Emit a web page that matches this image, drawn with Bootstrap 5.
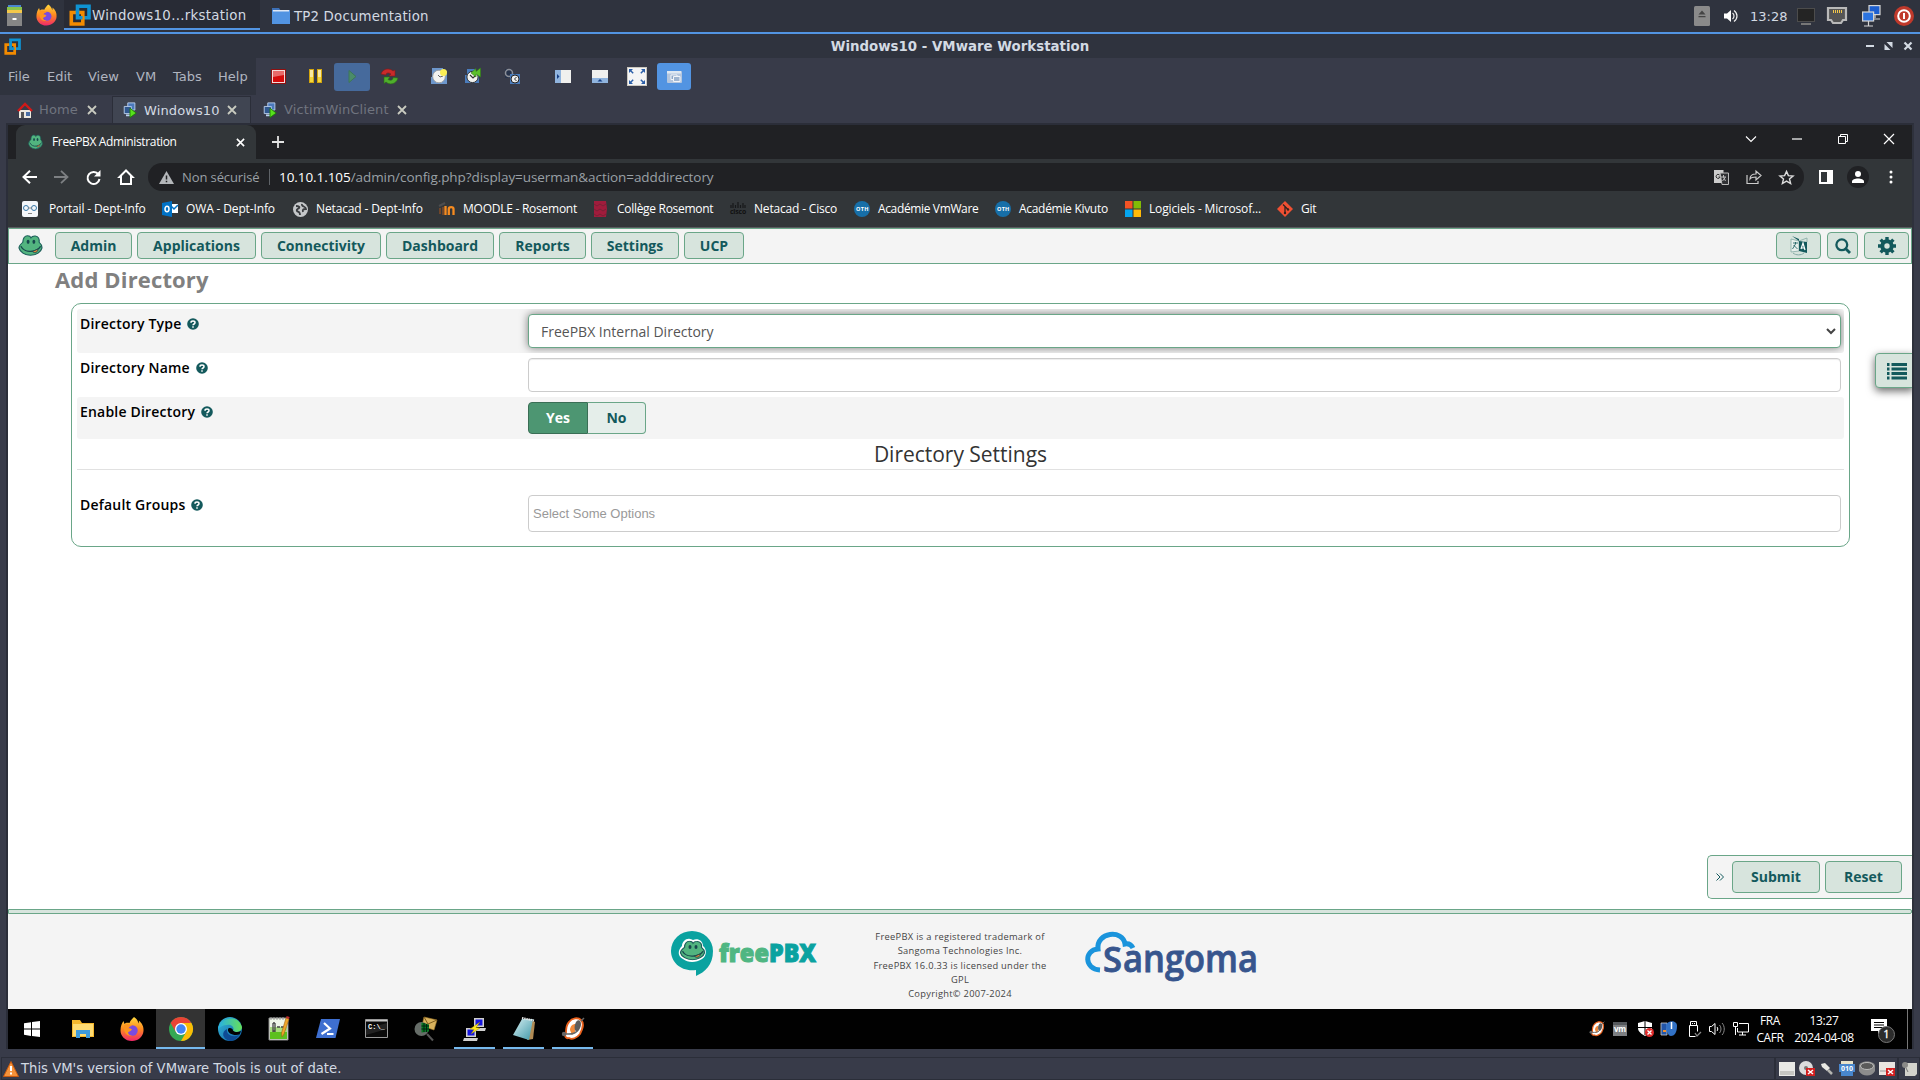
<!DOCTYPE html>
<html lang="fr">
<head>
<meta charset="utf-8">
<title>Windows10 - VMware Workstation</title>
<link href="https://cdn.jsdelivr.net/npm/bootstrap@5.3.0/dist/css/bootstrap.min.css" rel="stylesheet">
<style>
html,body{width:1920px;height:1080px;overflow:hidden}
body{background:#383b49;font-family:"DejaVu Sans",sans-serif;font-size:13px;line-height:1;color:#d3dae3}
svg{display:block;flex:none;overflow:visible}
.seg{font-family:"Open Sans","Noto Sans",sans-serif}
.cellx{display:flex;align-items:center;justify-content:center;flex:none}
/* host panel */
.panel-top{height:34px;background:#2f333e;border-bottom:2px solid #5294e2;padding-left:7px}
.panel-top .ffx{margin-left:14px}
.task-on{width:196px;height:30px;background:#282b35;border-bottom:2px solid #5294e2;padding:4px 0 0 5px;margin-left:7px}
.task-on svg{margin-top:-2px}
.task-on span{margin-left:1px;font-size:13.33px;letter-spacing:.3px;white-space:nowrap}
.task-off{height:32px;margin-left:12px;gap:4px;font-size:13.33px;letter-spacing:.18px}
.task-off span{padding-top:2px}
.hosttray{height:32px;padding-right:6px}.clk{width:47px;padding-left:12px;margin-right:12px}.i1{margin-left:14px}.i2{margin-left:12px}.i3{margin-left:15px}.i4{margin-left:13px}
.titlebar{height:24px;background:#2f333e;font-weight:700;font-size:13.33px;letter-spacing:.02px}
.titlebar .mid{padding-top:1px}
.titlebar .side{width:110px}
.menus{height:37px;width:256px;background:#2f333e;color:#b0b5c0;padding:0 0 1px 8px;font-size:13px}
.menus span{flex:none}
.menus span:nth-child(1){width:39px}.menus span:nth-child(2){width:41px}.menus span:nth-child(3){width:48px}.menus span:nth-child(4){width:37px}.menus span:nth-child(5){width:45px}
.tools .cellx{height:28px}
.tools .cellx:not(.playb):not(.unity){margin-top:-1px}
.t44{width:44px}.t34{width:30px;margin-right:4px}.playb{width:36px;background:#466a9c;border-radius:3px}.t40{width:38px}.t60{width:32px;margin-left:15px}.t36{width:37px}.t39{width:39px;margin-right:12px}.t61{width:39px}.t14{width:36px}
.unity{width:34px;height:27px!important;background:#5294e2;border-radius:3px;margin-left:2px}
.vmtabs{height:28px;padding-left:6px}
.vmtab{height:27px;margin-top:1px;padding:0 10px;color:#70747f;letter-spacing:.12px}
.vmtab.on{background:#404552;border:1px solid #2b2e39;border-bottom:0;color:#d3dae3}
.vmtab svg.cl{color:#c9cbc0}
.tabA{width:106px;padding-left:11px}.tabA .nm{width:48px;margin-left:6px}.tabB{width:139px}.tabB .nm{width:83px;margin-left:7px}.tabC .nm{width:113px;margin-left:7px}.vmtab.tabC{padding-left:12px}
.vm-frame{margin-left:6px;width:1908px;border:2px solid #2b2e39;border-bottom:0;border-right:2px solid #2e313c}
.guest{width:1904px;height:924px;background:#fff}
/* browser */
.strip{height:34px;background:#202124}
.btab{width:240px;height:34px;margin-left:8px;background:#323639;border-radius:9px 9px 0 0;color:#fff;font-size:12px;padding:0 11px 0 12px}
.btt{margin-left:9px;letter-spacing:-.36px}.plus{margin-left:16px}.winb{gap:36px;padding-right:18px;margin-top:-6px}
.toolbar{height:36px;background:#323639}
.omni{width:1656px;height:28px;background:#202124;border-radius:14px;color:#9aa0a6;font-size:14px}
.omni .sep{width:1px;height:16px;background:#5f6368;margin:0 9px 0 8px}
.navi{padding-left:14px;width:140px;gap:17px}.warn{margin:0 8px 0 11px}.ns{width:79px;letter-spacing:-.1px;font-size:13px}.url{font-size:13.5px;letter-spacing:-.07px;padding-top:1px}
.omr{gap:17px;padding-right:10px}.sp{margin-left:15px}.av{margin-left:14px}.dots{margin-left:20px}
.marks{height:33px;background:#323639;color:#fff;font-size:12px;padding:0 0 4px 14px;border-bottom:1px solid #5a5c60}
.bm{flex:none;display:flex;align-items:center;gap:8px;white-space:nowrap;letter-spacing:-.3px}
.bm:nth-child(-n+3){letter-spacing:-.14px}
.bm:nth-child(1){width:140px;gap:11px}.bm:nth-child(2){width:131px}.bm:nth-child(3){width:146px}.bm:nth-child(4){width:154px;letter-spacing:-.25px}.bm:nth-child(5){width:137px}.bm:nth-child(6){width:124px;letter-spacing:-.18px}.bm:nth-child(7){width:141px;letter-spacing:-.36px}.bm:nth-child(8){width:130px}.bm:nth-child(9){width:152px;letter-spacing:-.15px}
/* FreePBX page */
.site{height:781px;font-family:"Open Sans",sans-serif;position:relative;overflow:hidden}
.fnav{height:36px;background:#f4f4f4;border:1px solid #6aa688;padding:0 2px 1px 9px}
.fbtn,.fbtn:hover{height:27px;background:#d7e4dd;border:1px solid #6aa688;border-radius:4px;color:#13595c;font-weight:700;font-size:14px;padding:0;display:flex;align-items:center;justify-content:center;line-height:1;text-decoration:none}
.fmenu{gap:5px;margin-left:11px}.fright{gap:6px}
.fmenu .fbtn:nth-child(1){width:77px}.fmenu .fbtn:nth-child(2){width:119px}.fmenu .fbtn:nth-child(3){width:120px}.fmenu .fbtn:nth-child(4){width:108px}.fmenu .fbtn:nth-child(5){width:87px}.fmenu .fbtn:nth-child(6){width:88px}.fmenu .fbtn:nth-child(7){width:60px}
.w45{width:45px}.w31{width:31px}
.ttl{font-size:22px;letter-spacing:.15px;font-weight:700;color:#808080;margin:0;padding:3px 0 0 47px;height:39px;line-height:24px}
.pane{margin-left:63px;width:1779px;height:244px;border:1px solid #6aa688;border-radius:10px;padding:5px}
.frow{height:44px;padding:5px 3px 0;display:flex;border-radius:3px}
.frow.alt{background:#f4f4f4}
.frow .lb{width:448px;flex:none;color:#000;font-weight:600;font-size:14px;letter-spacing:.2px;line-height:20px;display:flex;gap:6px;align-items:center;height:20px}
.frow .form-control{width:1313px;height:34px;border:1px solid #ccc;border-radius:4px;font-size:14px;color:#555;padding:0 7px 0 12px;display:flex;align-items:center;justify-content:space-between;box-shadow:inset 0 1px 1px rgba(0,0,0,.075);background:#fff}
.frow .form-control.foc{border-color:#6aa688;box-shadow:0 0 8px rgba(0,0,0,.5)}
.clip{overflow:hidden}.r3{height:42px}
.frow.r4{padding-top:25px;height:62px}.r4 .form-control.chz{height:37px;font-family:"Liberation Sans",sans-serif;font-size:13px;color:#999;padding-left:4px;box-shadow:none}
.car{margin-right:-3px}
.yn{width:60px;height:32px;font-weight:700;font-size:14px;display:flex;align-items:center;justify-content:center;border:1px solid #6aa688}
.yn.y{background:#4d9672;color:#fff;border-color:#3a6e55;border-radius:4px 0 0 4px}
.yn.n{width:58px;background:#e5eeea;color:#13595c;border-left:0;border-radius:0 4px 4px 0}
.sect{height:31px;border-bottom:1px solid #e1e1e1;text-align:center;font-size:21px;letter-spacing:-.02px;color:#333;line-height:30px}
.foot{height:100px;margin-top:362px}
.bar5{height:5px;border:1px solid #6aa688;background:#d7e4dd;border-radius:0 2px 2px 0}
.fbody{background:#f4f4f4;height:95px;display:flex}
.ftxt{font-size:9.3px;line-height:14.3px;color:#444;text-align:center;letter-spacing:.3px;width:200px;padding-top:16px;margin-left:43px}
.lg1{margin:17px 0 0 663px}.lg2{margin:18px 0 0 25px}
.sidebtn{position:absolute;right:-2px;top:125px;width:39px;height:35px;background:#d7e4dd;border:1px solid #6aa688;border-radius:4px 0 0 4px;box-shadow:0 3px 9px rgba(0,0,0,.6);padding:0 0 0 11px;line-height:1}
.actions{position:absolute;right:-1px;top:627px;width:206px;height:44px;background:#f4f4f4;border:1px solid #6aa688;border-right:0;border-radius:5px 0 0 5px;color:#13595c}
.actions .fbtn{height:32px}
.chev{width:24px;display:flex;justify-content:center}.sb{width:88px;margin-right:5px}.rs{width:77px}
/* guest taskbar */
.wbar{height:40px;background:#010101}
.tb{width:49px;height:40px;border-bottom:2px solid transparent;padding-top:1px;flex:none;display:flex;align-items:center;justify-content:center}
.tb.act{background:#333;border-color:#76b9ed}
.tb.run{width:41px;margin:0 4px;border-color:#76b9ed}
.wbar>.tb:first-child{width:50px;padding-right:2px}
.tray{color:#fff;font-size:12px;text-align:center;line-height:17px}
.tray .a{margin-left:8px}.tray .b{margin-left:11px}.tray .c{margin-left:7px}.tray .d{margin-left:11px}.tray .e{margin-left:7px}.tray .f{margin-left:8px}
.tray .g{width:30px;margin-left:6px;letter-spacing:-.4px}.tray .h{width:60px;margin-left:9px;letter-spacing:-.3px}.tray .n{margin:3px 12px 0 17px}.pk{width:1px;height:40px;background:#777;margin-right:4px}
/* host status bar */
.stat{height:23px;border:1px solid #2b2e39;margin:8px 0 0 1px;padding-left:1px;font-size:13.2px}
.stat .dev{border-left:2px solid #2b2e39;height:21px;padding:0 1px 0 3px;gap:4px}
.stt{margin-left:2px}.stat .dev svg:nth-child(3){margin:0 1px}.stat .last{width:22px;padding:0 0 0 3px;margin-left:1px}
</style>
<script src="https://cdn.jsdelivr.net/npm/bootstrap@5.3.0/dist/js/bootstrap.bundle.min.js"></script>
</head>
<body>
<svg width="0" height="0" class="position-absolute">
<defs>
<linearGradient id="ffo" x1="0" y1="0" x2="0" y2="1"><stop offset="0" stop-color="#ffd83d"/><stop offset=".5" stop-color="#ff8a1f"/><stop offset="1" stop-color="#f0286a"/></linearGradient>
<linearGradient id="edg" x1="0" y1="0" x2="1" y2="1"><stop offset="0" stop-color="#37bdd8"/><stop offset="1" stop-color="#0c59a4"/></linearGradient>
<linearGradient id="edg2" x1="0" y1="0" x2="1" y2="0"><stop offset="0" stop-color="#27b0e6"/><stop offset="1" stop-color="#66e05a"/></linearGradient>
<linearGradient id="npg" x1="0" y1="0" x2="1" y2="1"><stop offset="0" stop-color="#d5eef1"/><stop offset="1" stop-color="#3f98a8"/></linearGradient>
</defs>
<symbol id="ff" viewBox="0 0 24 24"><path d="M14 0c3 2 4 4 4.500 6.500.5-1 .5-2 .3-3C22 6 24 10 23.500 14 23 20 18 24 12 24 5 24 .3 19 .5 13 .6 9 2 6 3.500 4l1 3C5.500 5.500 7.500 5.500 9.500 6 10 4 12 2 14 0z" fill="url(#ffo)"/><circle cx="12.500" cy="13.500" r="5.200" fill="#7a4be0"/><path d="M4 8c3-2 6-1 8 1-2 0-3 1-3.500 2.500 1.500-.5 2.500.5 3.500 1-1 2-3 1.500-4 3 0 1 1 3 4 3-5 1.500-9-3-8-10.500z" fill="#ff9520"/></symbol>
<symbol id="vmw" viewBox="0 0 22 22"><g fill="none" stroke-width="3.600"><path d="M8.500 8.500V2.300h11.500v11.500H14" stroke="#0f93d3"/><path d="M8.500 8.500H2.300V20h11.500V8.500z" stroke="#f38b00"/><path d="M8.500 6v7.800h5" stroke="#0f93d3"/></g></symbol>
<symbol id="frog" viewBox="0 0 26 26"><path d="M5 9C5 4 7 1 10 1c2 0 3 1 3.500 2.500C14.500 1.500 16 1 18 1.200c3 .3 4.500 3.500 4 7.800 2 2 3 4.500 3 7C24 21 19 25 13 25S2 21 1 16c0-3 2-5 4-7z" fill="#52b47f" stroke="#1c5e5a" stroke-width="1.200"/><path d="M3 14c2 5 7 7 12 6 4-.5 7-3 8.500-6" fill="none" stroke="#17474d" stroke-width="1.500"/><ellipse cx="10.500" cy="8.500" rx="1.500" ry="2.600" fill="#17474d"/><ellipse cx="16.500" cy="8.500" rx="1.500" ry="2.600" fill="#17474d"/><path d="M15 20.500l5.500-3c1 3-3 6-5.500 3z" fill="#e88a3a" stroke="#17474d"/></symbol>
<symbol id="frogw" viewBox="0 0 26 26" preserveAspectRatio="none"><use href="#frog" width="26" height="26"/></symbol>
<symbol id="x" viewBox="0 0 10 10"><path d="M1 1l8 8M9 1L1 9" stroke="currentColor" stroke-width="1.800"/></symbol>
<symbol id="run" viewBox="0 0 15 18"><path d="M5 1h8v8H5z" fill="#4a78bb" stroke="#bcd2ef"/><path d="M1 5h8v8H1z" fill="#31588f" stroke="#bcd2ef"/><path d="M3 15h5" stroke="#bcd2ef" stroke-width="2"/><path d="M7.500 7l7 5.500-7 5z" fill="#57e01c" stroke="#1d7a08"/></symbol>
<symbol id="help" viewBox="0 0 12 12"><circle cx="6" cy="6" r="5.800" fill="#13595c"/><path d="M4 4.700C4 2.500 8 2.500 8 4.700 8 6 6 6 6 7.300M6 8.200v1.500" fill="none" stroke="#fff" stroke-width="1.500"/></symbol>
<symbol id="oth" viewBox="0 0 16 16"><circle cx="8" cy="8" r="8" fill="#176fa8"/><text x="8" y="10.300" text-anchor="middle" font-family="Open Sans" font-size="5.500" font-weight="700" fill="#fff" textLength="12">OTH</text></symbol>
<symbol id="head" viewBox="0 0 24 24"><path d="M8 5c3-4 9-5 12-2 4 4 1 10-1 14-3 4-8 6-11 4-3 1-5-2-3-5 0-4 0-8 3-11z" fill="#fff" stroke="#e8601c" stroke-width="1.800"/><path d="M9 13c0-4 3-6 5-6v8l-3 3z" fill="#f08a3c"/><path d="M15 5c2-3 5-2 5 2 0 3-2 7-4 8-3-1-3-6-1-10z" fill="#5c5c5c"/><path d="M20 4l3-3M16 14c-3 4-7 3-11 3" stroke="#666" stroke-width="1.500" fill="none"/><circle cx="3" cy="17" r="2.200" fill="#666"/></symbol>
</svg>

<!-- host panel -->
<header class="panel-top d-flex align-items-start">
  <div class="cellx"><svg class="mt-1" width="15" height="22" viewBox="0 0 15 22"><path d="M1 1h13v3H1z" fill="#4a86cf"/><path d="M0 3h15v3H0z" fill="#8bc34a"/><path d="M0 6h15v3H0z" fill="#f4c84a"/><path d="M0 9h15v13H0z" fill="#868686"/><path d="M5.500 14h4v2h-4z" fill="#fff"/></svg></div>
  <div class="cellx ffx mt-1"><svg width="21" height="22"><use href="#ff" width="21" height="22"/></svg></div>
  <div class="task-on d-flex align-items-center"><svg width="22" height="22"><use href="#vmw" width="22" height="22"/></svg><span>Windows10...rkstation</span></div>
  <div class="task-off d-flex align-items-center"><svg width="18" height="16" viewBox="0 0 18 16"><path d="M0 0h7l2 3H0z" fill="#3c6fb5"/><path d="M0 2h18v14H0z" fill="#5294e2"/><path d="M1 2h16v1.500H1z" fill="#dfe8f5"/></svg><span>TP2 Documentation</span></div>
  <div class="ms-auto d-flex align-items-center hosttray">
    <svg width="16" height="20" viewBox="0 0 16 20"><rect width="16" height="20" rx="1.500" fill="#8a8a8a"/><path d="M4.500 8.500L8 4.500l3.500 4zM4.500 10h7v1.300h-7z" fill="#444"/></svg>
    <svg class="i1" width="14" height="14" viewBox="0 0 14 14"><path d="M0 4.500h3L7 1v12L3 9.500H0z" fill="#fff"/><path d="M8.500 4c2 1.500 2 4.500 0 6M10 1.500c4 3 4 8 0 11" fill="none" stroke="#eee" stroke-width="1.200"/></svg>
    <span class="clk">13:28</span>
    <svg width="18" height="17" viewBox="0 0 18 17"><rect x=".5" y=".5" width="17" height="13" fill="#242424" stroke="#4c4c4c"/><path d="M4 15h10v2H4z" fill="#777"/></svg>
    <svg class="i2" width="20" height="18" viewBox="0 0 20 18"><path d="M1 1h18v12h-3l-2 3H6l-2-3H1z" fill="#555" stroke="#b9b9b9" stroke-width="2.200"/><path d="M6.500 3v3m2-3v3m2-3v3m2-3v3m2-3v3" stroke="#f4c84a"/></svg>
    <svg class="i3" width="19" height="22" viewBox="0 0 19 22"><g stroke="#d5d5d5" stroke-width="1.200"><rect x="7" y=".6" width="11" height="9" fill="#1d5fd0"/><path d="M10 14h8M13 10v3"/><rect x=".6" y="7" width="11" height="9" fill="#2c74e0"/><path d="M2 21h9M6.500 16v5"/></g></svg>
    <svg class="i4" width="20" height="20" viewBox="0 0 20 20"><circle cx="10" cy="10" r="10" fill="#c0392b"/><circle cx="10" cy="10" r="5.800" fill="none" stroke="#fff" stroke-width="2"/><path d="M10 7v6" stroke="#fff" stroke-width="2"/></svg>
  </div>
</header>

<div class="titlebar d-flex align-items-center justify-content-between">
  <div class="side ps-1"><svg width="17" height="17"><use href="#vmw" width="17" height="17"/></svg></div>
  <div class="mid">Windows10 - VMware Workstation</div>
  <div class="side d-flex align-items-center justify-content-end pe-2"><svg class="me-2" width="29" height="10" viewBox="0 0 29 10"><path d="M3 5h8" stroke="#d3dae3" stroke-width="2"/><path d="M23.500 1h6v6zM21.500 3v6h6z" fill="#d3dae3"/></svg><svg class="ms-1" width="8" height="8" viewBox="0 0 8 8"><path d="M.5.500l7 7m0-7l-7 7" stroke="#d3dae3" stroke-width="2.200"/></svg></div>
</div>

<div class="d-flex align-items-center">
  <nav class="menus d-flex align-items-center"><span>File</span><span>Edit</span><span>View</span><span>VM</span><span>Tabs</span><span>Help</span></nav>
  <div class="tools d-flex align-items-center">
    <div class="cellx t44"><svg width="15" height="15" viewBox="0 0 15 15"><rect width="15" height="15" fill="#8e1010"/><rect x="1" y="1" width="13" height="13" fill="#f3dada"/><rect x="2" y="2" width="11" height="11" fill="#d40b0b"/><path d="M2 2h11v4L2 8z" fill="#e86a6a"/></svg></div>
    <div class="cellx t34"><svg width="13" height="14" viewBox="0 0 13 14"><path d="M0 0h5v14H0zM8 0h5v14H8z" fill="#d3a50e"/><path d="M1 1h3v7H1zM9 1h3v7H9z" fill="#faeaa0"/><path d="M1 8h3v5H1zM9 8h3v5H9z" fill="#f4d63c"/></svg></div>
    <div class="cellx playb"><svg width="9" height="13" viewBox="0 0 9 13"><path d="M1 .5l7 6-7 6z" fill="#4b8c69" stroke="#3c7659"/></svg></div>
    <div class="cellx t40"><svg width="17" height="15" viewBox="0 0 17 15"><path d="M0 5C2-1 9-1 12 2l2-1v6H8l2-2C7 3 5 4 5 6z" fill="#c92a2a" stroke="#8c1717" stroke-width=".6"/><path d="M17 9c-2 7-9 7-12 4l-2 1.500V8h6l-2 2.500c3 1.500 5 .5 5-2z" fill="#4fae2c" stroke="#2a6c15" stroke-width=".6"/></svg></div>
    <div class="cellx t60"><svg width="16" height="16" viewBox="0 0 16 16"><path d="M1 0h11v3h4v13H0V9h1z" fill="#6d97cc"/><circle cx="8" cy="8.500" r="6.300" fill="#f3f3f0" stroke="#999" stroke-width=".8"/><path d="M7 7l2 2 3-1" fill="none" stroke="#666"/><circle cx="12.500" cy="4.500" r="3.500" fill="#fbee55"/></svg></div>
    <div class="cellx t36"><svg width="17" height="16" viewBox="0 0 17 16"><path d="M2 1h8v2h4v12H0V7h2z" fill="#4a7cbd"/><circle cx="7.500" cy="9" r="5.600" fill="#f3f3f0" stroke="#333"/><path d="M5 7l3 3 3-3" fill="none" stroke="#333" stroke-width="1.200"/><path d="M6 5l5-4.500v3l4.500-3.500v9L11 6v3z" fill="#5cbf2c" stroke="#2f7d14" stroke-width=".6"/></svg></div>
    <div class="cellx t39"><svg width="16" height="16" viewBox="0 0 16 16"><path d="M1 1h7v9H1z" fill="#26324a"/><circle cx="5" cy="5" r="3.500" fill="none" stroke="#8c8f98" stroke-width="1.500"/><path d="M6 6h10v10H6z" fill="#4a7cbd"/><circle cx="11" cy="11" r="4" fill="#eee" stroke="#222"/><path d="M12.500 9l-2 2 2 2" stroke="#333" fill="none"/></svg></div>
    <div class="cellx t61"><svg width="16" height="13" viewBox="0 0 16 13"><rect width="16" height="13" fill="#f0f0ee"/><path d="M0 0h6v13H0z" fill="#90b4de"/><path d="M2 4v5l2.500-2.500z" fill="#153d83"/></svg></div>
    <div class="cellx t14"><svg width="16" height="13" viewBox="0 0 16 13"><rect width="16" height="13" fill="#f0f0ee"/><path d="M0 8h16v5H0z" fill="#90b4de"/><path d="M5.500 11.500h5L8 9z" fill="#153d83"/></svg></div>
    <div class="cellx t36"><svg width="20" height="19" viewBox="0 0 20 19"><rect x=".5" y=".5" width="19" height="18" fill="#f5f5f5" stroke="#ccc8c0"/><g fill="#2c5fa8"><path d="M2 2h4L2 6zM18 2h-4l4 4zM2 17h4l-4-4zM18 17h-4l4-4z"/></g><path d="M3 3l4 4m10-4l-4 4M3 16l4-4m10 4l-4-4" stroke="#2c5fa8" stroke-width="1.500" stroke-dasharray="4.500 2"/></svg></div>
    <div class="cellx unity"><svg width="15" height="12" viewBox="0 0 15 12"><rect width="15" height="12" rx="1" fill="#b4c6de"/><path d="M0 0h14v2.500H0z" fill="#dfe8f2"/><path d="M4 4h6v4.500H4z" fill="#8da7c8" stroke="#f2f5f9"/><path d="M6.500 5.500h6.500v5H6.500z" fill="#9fb5d1" stroke="#f2f5f9"/></svg></div>
  </div>
</div>

<div class="vmtabs d-flex">
  <div class="vmtab d-flex align-items-center tabA"><svg width="16" height="16" viewBox="0 0 16 16"><path d="M2 8h12v8H2z" fill="#ece9df"/><path d="M1 9l7-7 7 7" fill="none" stroke="#d01818" stroke-width="2.400"/><path d="M4 10h3v6H4z" fill="#555"/><path d="M9 10h4v4H9z" fill="#4a6fa5"/></svg><span class="nm">Home</span><svg class="cl" width="10" height="10"><use href="#x" width="10" height="10"/></svg></div>
  <div class="vmtab on d-flex align-items-center tabB"><svg width="14" height="16"><use href="#run" width="14" height="16"/></svg><span class="nm">Windows10</span><svg class="cl" width="10" height="10"><use href="#x" width="10" height="10"/></svg></div>
  <div class="vmtab d-flex align-items-center tabC"><svg width="14" height="16"><use href="#run" width="14" height="16"/></svg><span class="nm">VictimWinClient</span><svg class="cl" width="10" height="10"><use href="#x" width="10" height="10"/></svg></div>
</div>

<div class="vm-frame"><main class="guest">
  <div class="strip d-flex align-items-center seg">
    <div class="btab d-flex align-items-center"><svg width="15" height="16"><use href="#frog" width="15" height="16"/></svg><span class="btt">FreePBX Administration</span><svg class="ms-auto" width="9" height="9" color="#fff"><use href="#x" width="9" height="9"/></svg></div>
    <svg class="plus" width="12" height="12" viewBox="0 0 12 12"><path d="M6 0v12M0 6h12" stroke="#e3e3e3" stroke-width="1.800"/></svg>
    <div class="ms-auto d-flex align-items-center winb">
      <svg width="10" height="6" viewBox="0 0 10 6"><path d="M0 .5l5 5 5-5" fill="none" stroke="#fff" stroke-width="1.100"/></svg>
      <svg width="10" height="2" viewBox="0 0 10 2"><path d="M0 1h10" stroke="#fff" stroke-width="1.200"/></svg>
      <svg width="10" height="10" viewBox="0 0 10 10"><path d="M.5 2.500h7v7h-7zM2.500 2V.5h7v7H8" fill="none" stroke="#fff"/></svg>
      <svg width="10" height="10" viewBox="0 0 10 10"><path d="M0 0l10 10M10 0L0 10" stroke="#fff" stroke-width="1.200"/></svg>
    </div>
  </div>
  <div class="toolbar d-flex align-items-center seg">
    <div class="d-flex align-items-center navi">
      <svg width="15" height="14" viewBox="0 0 15 14"><path d="M15 7H1.500M8 .8L1.500 7 8 13.200" fill="none" stroke="#fff" stroke-width="2"/></svg>
      <svg width="15" height="14" viewBox="0 0 15 14"><path d="M0 7h13.500M7 .8L13.500 7 7 13.200" fill="none" stroke="#7d8083" stroke-width="1.800"/></svg>
      <svg width="15" height="15" viewBox="0 0 15 15"><path d="M12.500 4.500A6 6 0 1 0 13.500 9" fill="none" stroke="#fff" stroke-width="2"/><path d="M14.500 0v6.500H8z" fill="#fff"/></svg>
      <svg width="16" height="16" viewBox="0 0 16 16"><path d="M8 1.500L1.500 8H3v7h10V8h1.500z" fill="none" stroke="#fff" stroke-width="2"/></svg>
    </div>
    <div class="omni d-flex align-items-center">
      <svg class="warn" width="15" height="13" viewBox="0 0 15 13"><path d="M7.500 0L15 13H0z" fill="#b4b7ba"/><path d="M7.500 4.500v4M7.500 9.700v1.600" stroke="#202124" stroke-width="1.500"/></svg>
      <span class="ns">Non sécurisé</span><span class="sep"></span><span class="url"><span class="text-white">10.10.1.105</span>/admin/config.php?display=userman&amp;action=adddirectory</span>
      <div class="ms-auto d-flex align-items-center omr">
        <svg width="15" height="15" viewBox="0 0 15 15"><rect x=".5" y=".5" width="8.500" height="12" fill="#ccc" stroke="#ccc"/><path d="M6 3h8.500v11.500H8z" fill="#303134" stroke="#bbb"/><path d="M7 7h5m-2.500-2v2l2 4m0-4l-3 4" stroke="#bbb" fill="none"/><path d="M5.500 5a2 2 0 1 0 .5 2H4.500" stroke="#333" fill="none"/></svg>
        <svg width="16" height="14" viewBox="0 0 16 14"><path d="M1 5v8.500h11V11M4 9c0-4 3-5 6-5V1l5 4.500L10 10V7C7 7 5 7.500 4 9z" fill="none" stroke="#ccc" stroke-width="1.200"/></svg>
        <svg width="15" height="15" viewBox="0 0 16 16"><path d="M8 1.500l2 4.500 5 .4-3.800 3.200L12.400 14.500 8 11.800l-4.400 2.700 1.200-4.900L1 6.400 6 6z" fill="none" stroke="#ddd" stroke-width="1.500"/></svg>
      </div>
    </div>
    <svg class="sp" width="14" height="14" viewBox="0 0 14 14"><path d="M1 1h12v12H1z" fill="none" stroke="#fff" stroke-width="2"/><path d="M8 1h5v12H8z" fill="#fff"/></svg>
    <svg class="av" width="22" height="22" viewBox="0 0 22 22"><circle cx="11" cy="11" r="11" fill="#202124"/><circle cx="11" cy="8" r="3" fill="#fff"/><path d="M5 17v-1.500c0-4 12-4 12 0V17z" fill="#fff"/></svg>
    <svg class="dots" width="4" height="14" viewBox="0 0 4 14"><circle cx="2" cy="2" r="1.500" fill="#fff"/><circle cx="2" cy="7" r="1.500" fill="#fff"/><circle cx="2" cy="12" r="1.500" fill="#fff"/></svg>
  </div>
  <div class="marks d-flex align-items-center seg">
    <div class="bm"><svg width="16" height="16" viewBox="0 0 16 16"><rect width="16" height="16" rx="2" fill="#f4f7fa"/><circle cx="4" cy="7" r="2.500" fill="none" stroke="#3577a8"/><circle cx="12" cy="7" r="2.500" fill="none" stroke="#3577a8"/><path d="M6 7h4M6 12.500h4" stroke="#888"/></svg>Portail - Dept-Info</div>
    <div class="bm"><svg width="16" height="16" viewBox="0 0 16 16"><path d="M8 3h8v9H8z" fill="#fff"/><path d="M8 4l4 4 4-4" fill="none" stroke="#0072c6" stroke-width="1.500"/><path d="M0 2l10-2v16L0 14z" fill="#0072c6"/><ellipse cx="5" cy="8" rx="2" ry="2.700" fill="none" stroke="#fff" stroke-width="1.500"/></svg>OWA - Dept-Info</div>
    <div class="bm"><svg width="15" height="15" viewBox="0 0 15 15"><circle cx="7.500" cy="7.500" r="7.500" fill="#c4c7c9"/><path d="M3 4c3 0 4 1 3 2s-3 1-2 3c1 1 3 0 3 4M9 2c-1 3 4 2 4 5-2 0-4 0-3 3" stroke="#3a3d40" stroke-width="1.800" fill="none"/></svg>Netacad - Dept-Info</div>
    <div class="bm"><svg width="16" height="14" viewBox="0 0 16 14"><path d="M1 6v6M4 5v8" stroke="#70462a" stroke-width="2"/><path d="M6.500 4v9" stroke="#f68b1f" stroke-width="2.300"/><path d="M9.800 13V7c0-2.500 4.700-2.500 4.700 0v6" fill="none" stroke="#f68b1f" stroke-width="2.300"/><path d="M0 4l6-3" stroke="#4b4d50" stroke-width="2"/></svg>MOODLE - Rosemont</div>
    <div class="bm"><svg width="16" height="16" viewBox="0 0 16 16"><path d="M1 0h12l1 8-1 8H1z" fill="#a01c3c"/><path d="M1 3l3 2 3-2 3 2 3-2M1 8l3 2 3-2 3 2 3-2M1 13l3 2 3-2 3 2 3-2" stroke="#7a2036" fill="none"/></svg>Collège Rosemont</div>
    <div class="bm"><svg width="16" height="16" viewBox="0 0 16 16"><path d="M1 4v3m2-5v5m2.500-3v3M8 1v6m2.500-3v3M13 2v5m2-3v3" stroke="#16181a" stroke-width="1.200"/><text x="0" y="13" font-family="Open Sans" font-weight="700" font-size="7" textLength="16" lengthAdjust="spacingAndGlyphs" fill="#111">cisco</text></svg>Netacad - Cisco</div>
    <div class="bm"><svg width="16" height="16"><use href="#oth" width="16" height="16"/></svg>Académie VmWare</div>
    <div class="bm"><svg width="16" height="16"><use href="#oth" width="16" height="16"/></svg>Académie Kivuto</div>
    <div class="bm"><svg width="16" height="16" viewBox="0 0 16 16"><path d="M0 0h7.500v7.500H0z" fill="#f35325"/><path d="M8.500 0H16v7.500H8.500z" fill="#81bc06"/><path d="M0 8.500h7.500V16H0z" fill="#05a6f0"/><path d="M8.500 8.500H16V16H8.500z" fill="#ffba08"/></svg>Logiciels - Microsof...</div>
    <div class="bm"><svg width="16" height="16" viewBox="0 0 16 16"><path d="M8 0l8 8-8 8-8-8z" fill="#f05033"/><path d="M6 3.500l5 5M8 5v7" stroke="#33211e" stroke-width="1.300"/><circle cx="8" cy="12" r="1.200" fill="#33211e"/><circle cx="11" cy="8.500" r="1.200" fill="#33211e"/></svg>Git</div>
  </div>

  <section class="site">
    <nav class="fnav d-flex align-items-center">
      <svg width="25" height="21"><use href="#frogw" width="25" height="21"/></svg>
      <div class="d-flex fmenu ps-1 ms-2">
        <a class="fbtn">Admin</a><a class="fbtn">Applications</a><a class="fbtn">Connectivity</a><a class="fbtn">Dashboard</a><a class="fbtn">Reports</a><a class="fbtn">Settings</a><a class="fbtn">UCP</a>
      </div>
      <div class="d-flex ms-auto fright">
        <a class="fbtn w45"><svg width="18" height="19" viewBox="0 0 18 19"><path d="M1 3l8 2v10l-8 1z" fill="#e8f0ec" stroke="#85aaa5" stroke-width=".8"/><path d="M9 5l8-3v4" fill="none" stroke="#85aaa5" stroke-width=".8"/><path d="M3 17c3 2.500 8 2.500 11 0" fill="none" stroke="#85aaa5"/><path d="M9 5l8 1v11l-8-2z" fill="#13595c"/><path d="M2 0l7 5V3z" fill="#13595c"/><path d="M3 7h5m-2.500-1v2l-3 5m1-4l4 4" stroke="#13595c" fill="none" stroke-width=".8"/><path d="M11 13l2-6 2 7m-3.500-2h3" stroke="#fff" stroke-width="1.200" fill="none"/></svg></a>
        <a class="fbtn w31"><svg width="16" height="16" viewBox="0 0 16 16"><circle cx="6.800" cy="6.800" r="5.400" fill="none" stroke="#13595c" stroke-width="2.300"/><path d="M10.500 10.500L15 15" stroke="#13595c" stroke-width="2.800"/></svg></a>
        <a class="fbtn w45"><svg width="18" height="18" viewBox="0 0 18 18"><circle cx="9" cy="9" r="4.700" fill="none" stroke="#13595c" stroke-width="4"/><path d="M9 0v4m0 10v4M0 9h4m10 0h4M2.600 2.600l3 3m6.800 6.800l3 3m0-12.800l-3 3m-6.800 6.800l-3 3" stroke="#13595c" stroke-width="3.400"/></svg></a>
      </div>
    </nav>
    <h1 class="ttl">Add Directory</h1>
    <div class="pane">
      <div class="frow alt clip"><div class="lb"><span>Directory Type</span><svg width="12" height="12"><use href="#help" width="12" height="12"/></svg></div><div class="form-control foc"><span>FreePBX Internal Directory</span><svg class="car" width="10" height="7" viewBox="0 0 10 7"><path d="M1 1l4 4 4-4" fill="none" stroke="#444" stroke-width="2"/></svg></div></div>
      <div class="frow"><div class="lb"><span>Directory Name</span><svg width="12" height="12"><use href="#help" width="12" height="12"/></svg></div><div class="form-control"></div></div>
      <div class="frow alt r3"><div class="lb"><span>Enable Directory</span><svg width="12" height="12"><use href="#help" width="12" height="12"/></svg></div><div class="yn y">Yes</div><div class="yn n">No</div></div>
      <div class="sect">Directory Settings</div>
      <div class="frow r4"><div class="lb"><span>Default Groups</span><svg width="12" height="12"><use href="#help" width="12" height="12"/></svg></div><div class="form-control chz">Select Some Options</div></div>
    </div>
    <button class="sidebtn d-flex align-items-center"><svg width="20" height="16" viewBox="0 0 20 16"><path d="M0 1.500h2.500m2 0H20M0 6h2.500m2 0H20M0 10.500h2.500m2 0H20M0 15h2.500m2 0H20" stroke="#13595c" stroke-width="2.800"/></svg></button>
    <div class="actions d-flex align-items-center"><span class="chev"><svg width="8" height="8" viewBox="0 0 8 8"><path d="M.5.500L4 4 .5 7.500M4 .5L7.500 4 4 7.500" fill="none" stroke="#13595c"/></svg></span><a class="fbtn sb">Submit</a><a class="fbtn rs">Reset</a></div>
    <footer class="foot">
      <div class="bar5"></div>
      <div class="fbody">
        <svg class="lg1" width="146" height="46" viewBox="0 0 146 46"><path d="M21 0a21 20 0 0 1 21 20c0 14-8 21-17 25v-6C10 41 0 31 0 20A21 20 0 0 1 21 0z" fill="#0aa2a0"/><path d="M11 15c0-4 4-8 8-7 2 0 2 1 3 1 5-2 10 1 10 6 4 3 4 10-1 13-6 4-14 4-19 0-6-3-5-9-1-13z" fill="#fff"/><use href="#frogw" x="8.500" y="9.500" width="26" height="20"/><text y="30.500" x="48" font-family="Open Sans" font-weight="800" font-size="24" fill="#4fb682" stroke="#4fb682" stroke-width="1" textLength="50" lengthAdjust="spacingAndGlyphs">free</text><text x="98" y="30.500" font-family="Open Sans" font-weight="800" font-size="24" fill="#0aa2a0" stroke="#0aa2a0" stroke-width="1" textLength="47" lengthAdjust="spacingAndGlyphs">PBX</text></svg>
        <div class="ftxt">FreePBX is a registered trademark of<br>Sangoma Technologies Inc.<br>FreePBX 16.0.33 is licensed under the<br>GPL<br>Copyright© 2007-2024</div>
        <svg class="lg2" width="172" height="50" viewBox="0 0 172 50"><path d="M15 38C-1 37-1 18 13 17 11 0 38-3 40 12c5-1 7 2 8 4" fill="none" stroke="#1a94dc" stroke-width="5"/><text x="18" y="39.500" font-family="Open Sans" font-weight="600" font-size="34" fill="#37558d" stroke="#37558d" stroke-width=".8" textLength="19" lengthAdjust="spacingAndGlyphs">S</text><text x="38" y="39.500" font-family="Open Sans" font-weight="600" font-size="37" fill="#37558d" stroke="#37558d" stroke-width=".8" textLength="135" lengthAdjust="spacingAndGlyphs">angoma</text></svg>
      </div>
    </footer>
  </section>

  <div class="wbar d-flex align-items-center seg">
    <div class="tb"><svg width="16" height="16" viewBox="0 0 16 16"><path d="M0 2.300L7 1.200v6.400H0zM8 1l8-1v7.600H8zM0 8.500h7v6.400L0 13.800zM8 8.500h8V16l-8-1z" fill="#fff"/></svg></div>
    <div class="tb"><svg width="22" height="19" viewBox="0 0 22 19"><path d="M0 1h8l2 3h12v14H0z" fill="#f5b82e"/><path d="M1 5h20v12H1z" fill="#ffdc73"/><path d="M4 11h14v8h-4v-4H8v4H4z" fill="#3f9bdc"/></svg></div>
    <div class="tb"><svg width="24" height="24"><use href="#ff" width="24" height="24"/></svg></div>
    <div class="tb act"><svg width="24" height="24" viewBox="0 0 24 24"><circle cx="12" cy="12" r="12" fill="#34a853"/><path d="M12 0a12 12 0 0 1 10.400 6H12L6.800 15 1.600 6A12 12 0 0 1 12 0z" fill="#ea4335"/><path d="M22.400 6A12 12 0 0 1 12 24l5.200-9L12 6z" fill="#fbbc05"/><circle cx="12" cy="12" r="6" fill="#fff"/><circle cx="12" cy="12" r="4.700" fill="#4285f4"/></svg></div>
    <div class="tb"><svg width="24" height="24" viewBox="0 0 24 24"><circle cx="12" cy="12" r="12" fill="url(#edg)"/><path d="M0 12C1 1 20-4 24 10c0 5-6 6-9 4 2-4-2-7-6-6-4 0-7 2-9 4z" fill="url(#edg2)"/><path d="M9 12c-1 6 6 9 12 6-2 3-5 6-9 6-8-2-9-9-3-12z" fill="#0e4b94"/><path d="M10 12c1-2 5-1 5 1.500 2 2 5 2 8 .5l-1.500 3.500c-5 1.500-12.500-.5-11.500-5.500z" fill="#020202"/></svg></div>
    <div class="tb"><svg width="22" height="24" viewBox="0 0 22 24"><path d="M1 1h19v22H1z" fill="#eef5e7" stroke="#888"/><path d="M2 10h17v6H2z" fill="#a9de7f"/><path d="M2 15h17v7H2z" fill="#5cc01f"/><path d="M5 6h2M5 6v9m0-1h2m2-4h3m1 0h3M7 6v9" stroke="#444" stroke-width="1.300" fill="none"/><path d="M21 2l-5 15-2 3-.5-4L18 1z" fill="#f0a529" stroke="#996515" stroke-width=".6"/><path d="M18 1l3 1 .6-2-3-1z" fill="#b92b2b"/><path d="M3 0v3m3-3v3m3-3v3m3-3v3m3-3v3" stroke="#999"/></svg></div>
    <div class="tb"><svg width="24" height="19" viewBox="0 0 24 19"><path d="M5 0h19l-4.500 19H0z" fill="#3e6fd0"/><path d="M8 4l6 5.500L5.500 15M11 15h6.500" fill="none" stroke="#fff" stroke-width="2.200"/></svg></div>
    <div class="tb"><svg width="23" height="19" viewBox="0 0 23 19"><path d="M.5.500h22v18H.5z" fill="#0a0a0a" stroke="#9a9a9a"/><path d="M1 10L22 4v6L1 16z" fill="#222"/><path d="M1 1h21v1.500H1z" fill="#c8c8c8"/><text x="3" y="9.500" font-family="Liberation Mono" font-weight="700" font-size="7" fill="#fff">C:\_</text></svg></div>
    <div class="tb"><svg width="23" height="24" viewBox="0 0 23 24"><path d="M10 0l13 3-3 10-12-4z" fill="#d9b25d" stroke="#a37a28" stroke-width=".6"/><path d="M10 0l4 7 9-4" stroke="#7c5b1d" fill="none"/><circle cx="7.500" cy="12" r="7" fill="#666d68"/><path d="M7.500 5.500l7.500 2v7l-7.500 1z" fill="#087a23"/><path d="M10 6v9m2.500-8v8M7.500 9h7.500m-7.500 3h7.500" stroke="#021"/><path d="M13 17l6 6.500" stroke="#555" stroke-width="2"/></svg></div>
    <div class="tb run"><svg width="24" height="24" viewBox="0 0 24 24"><path d="M11 1h10v9H11zM10 11h13l-1 3H12z" fill="#d0d0d0"/><path d="M12.500 2.500h7v6h-7z" fill="#1515e0"/><path d="M3 11h10v9H3zM1 21h14l-1 3H0z" fill="#d0d0d0"/><path d="M4.500 12.500h7v6h-7z" fill="#1515e0"/><path d="M17 5L7 12l4 .5-3 4.500 9-6-4-.5z" fill="#ffe81a" stroke="#8a7c00" stroke-width=".4"/></svg></div>
    <div class="tb run"><svg width="24" height="24" viewBox="0 0 24 24"><path d="M19 3l4 2-2 17-6 1z" fill="#b18b54"/><path d="M10 2h11l-4 21L1 18z" fill="url(#npg)"/><path d="M10 1l12 2.500" stroke="#e8e8e8" stroke-width="2" stroke-dasharray="1.500 .7"/></svg></div>
    <div class="tb run"><svg width="24" height="24"><use href="#head" width="24" height="24"/></svg></div>
    <div class="ms-auto d-flex align-items-center tray">
      <svg width="16" height="16"><use href="#head" width="16" height="16"/></svg>
      <svg class="a" width="14" height="14" viewBox="0 0 14 14"><rect width="14" height="14" fill="#7d7f82"/><path d="M0 0h14v3H0z" fill="#55585c"/><text x="1" y="10" font-family="Open Sans" font-weight="700" font-size="8" fill="#fff" textLength="12">vm</text></svg>
      <svg class="b" width="16" height="16" viewBox="0 0 16 16"><path d="M7 0l7 2v5c0 4-4 6-7 8C4 13 0 11 0 7V2z" fill="#fff"/><path d="M7 0v14M0 6.500h14" stroke="#010101"/><circle cx="11.500" cy="11.500" r="4.500" fill="#e02b2b"/><path d="M9.500 9.500l4 4m0-4l-4 4" stroke="#fff" stroke-width="1.300"/></svg>
      <svg class="c" width="16" height="16" viewBox="0 0 16 16"><path d="M0 2h6v12H0z" fill="#2255a8" stroke="#ccc" stroke-width=".8"/><path d="M5 4c2-5 11-5 11 1 0 7-3 10-6 10S5 10 5 4z" fill="#3271c4"/><path d="M10.500 1v7" stroke="#fff" stroke-width="1.500"/><path d="M2 10h3" stroke="#f09030" stroke-width="2"/></svg>
      <svg class="d" width="14" height="16" viewBox="0 0 14 16"><path d="M2.500.5h6v4h-6zM1.500 4.500h8v6M1.500 4.500v11h6" fill="none" stroke="#fff"/><path d="M4 2.500h1m1 0h1" stroke="#fff"/><path d="M7 12l2 3 4-4" fill="none" stroke="#888" stroke-width="1.300"/></svg>
      <svg class="e" width="16" height="14" viewBox="0 0 16 14"><path d="M.5 4.500h2L6 1.500v11l-3.500-3h-2z" fill="none" stroke="#fff"/><path d="M8 5c1 1 1 3 0 4" stroke="#fff" fill="none"/><path d="M10.500 3c2 2 2 6 0 8M13 1c3 3 3 9 0 12" stroke="#888" fill="none"/></svg>
      <svg class="f" width="16" height="14" viewBox="0 0 16 14"><path d="M6 1.500h9.500v8.500h-11V6M9.500 10v3M6 13h7M.5.500h4v4h-4zM2.500 4.500V13" fill="none" stroke="#fff"/></svg>
      <div class="g">FRA<br>CAFR</div><div class="h">13:27<br>2024-04-08</div>
      <svg class="n" width="24" height="24" viewBox="0 0 24 24"><path d="M0 0h16v12h-6l-3 3v-3H0z" fill="#fff"/><path d="M3 3.500h10M3 6h10M3 8.500h10" stroke="#010101"/><circle cx="15.500" cy="15.500" r="8" fill="#2b2b2b" stroke="#777"/><text x="15.500" y="19" text-anchor="middle" font-family="Open Sans" font-size="11" fill="#fff" stroke="#fff" stroke-width=".3">1</text></svg>
      <div class="pk"></div>
    </div>
  </div>
</main></div>

<div class="stat d-flex align-items-center">
  <svg width="16" height="16" viewBox="0 0 16 16"><path d="M8 .5L15.500 15.500H.5z" fill="#f5923a" stroke="#c65a12"/><path d="M8 5v5M8 11.500v2" stroke="#fff" stroke-width="2"/></svg><span class="stt">This VM's version of VMware Tools is out of date.</span>
  <div class="dev ms-auto d-flex align-items-center">
    <svg width="16" height="14" viewBox="0 0 16 14"><rect width="16" height="14" fill="#e9e9e6"/><path d="M1 9h14v4H1z" fill="#c6c6c2"/></svg>
    <svg width="16" height="15" viewBox="0 0 16 15"><circle cx="7" cy="7" r="7" fill="#dcdcdc"/><circle cx="7" cy="7" r="2" fill="#777"/><path d="M7 7h9v8H7z" fill="#d11f1f"/><path d="M9 9l5 4m0-4l-5 4" stroke="#fff" stroke-width="1.500"/></svg>
    <svg width="14" height="14" viewBox="0 0 14 14"><path d="M1 2l4-1 5 5-3 3-5-4z" fill="#e8e8e3"/><path d="M8 8l4 4" stroke="#b5b5b0" stroke-width="2.500"/></svg>
    <svg width="16" height="16" viewBox="0 0 16 16"><path d="M2 0h12v3H2z" fill="#e8e2c8"/><path d="M0 3h16v8h-2v4H2v-4H0z" fill="#4886cc"/><text x="8" y="10" text-anchor="middle" font-family="Open Sans" font-size="7" font-weight="700" fill="#fff">010</text></svg>
    <svg width="16" height="15" viewBox="0 0 16 15"><path d="M0 5c0-6 16-6 16 0v5c-3 6-13 6-16 0z" fill="#8c8c8c"/><ellipse cx="8" cy="5" rx="6.500" ry="3.500" fill="#5a5a5a" stroke="#bbb"/></svg>
    <svg width="16" height="14" viewBox="0 0 16 14"><rect width="16" height="13" fill="#e9e5e0"/><path d="M1 9h14" stroke="#999"/><path d="M7 6h9v8H7z" fill="#d11f1f"/><path d="M9 8l5 4m0-4l-5 4" stroke="#fff" stroke-width="1.500"/></svg>
  </div>
  <div class="dev last d-flex align-items-center"><svg width="15" height="14" viewBox="0 0 15 14"><path d="M3 1h12v11l-2 2H3z" fill="#d3d3cc"/><circle cx="3" cy="3" r="3" fill="#8a8a88"/><path d="M4 6l2 4" stroke="#777"/></svg></div>
</div>
</body>
</html>
